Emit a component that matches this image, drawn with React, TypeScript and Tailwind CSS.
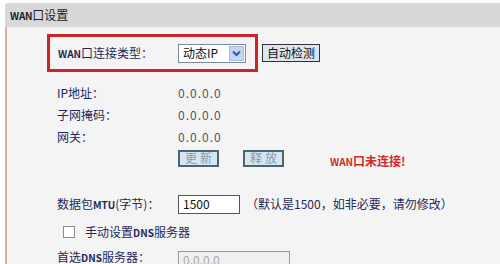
import React from "react";

const font = { fontFamily: '"Noto Sans CJK SC", "Noto Sans", sans-serif' };

function Row({ label, children, h = "h-[22px]" }: { label: React.ReactNode; children?: React.ReactNode; h?: string }) {
  return (
    <div className={`flex items-center ${h}`}>
      <div className="w-[171px] pl-[50px] shrink-0 text-[12px] text-[#1f2858] whitespace-nowrap">{label}</div>
      <div className="flex items-center">{children}</div>
    </div>
  );
}

export default function App() {
  return (
    <div className="w-[500px] h-[264px] bg-white pt-[3px] overflow-hidden" style={font}>
      <div className="ml-[5px] flex flex-col">
        <div className="h-[24px] shrink-0 bg-[#d8d8d8] flex items-center pl-[5px] text-[12px] text-[#222] rounded-tl-[3px]">
          <span className="text-[10px] font-bold tracking-tight">WAN</span>
          <span>口设置</span>
        </div>
        <div className="h-[260px] shrink-0 bg-[#f4f4f4] border-l-2 border-[#d4b0a0] flex flex-col">
          <div className="flex items-center mt-[7px]">
            <div className="ml-[40px] w-[211px] h-[38px] border-[3px] border-[#c8262a] flex items-center pl-[8px]">
              <div className="w-[120px] text-[12px] text-[#1f2858] whitespace-nowrap">
                <span className="text-[10px] font-bold">WAN</span>口连接类型：
              </div>
              <div className="w-[68px] h-[19px] bg-white border border-[#7a8a9a] flex items-center text-[12px] text-[#111]">
                <span className="pl-[4px] flex-1">动态IP</span>
                <span className="w-[15px] h-[15px] mr-[1px] bg-[#c6d6f0] border border-[#a8bce0] flex items-center justify-center">
                  <svg width="9" height="7" viewBox="0 0 9 7">
                    <path d="M1 1.5 L4.5 5 L8 1.5" stroke="#2f5ca8" strokeWidth="2" fill="none" />
                  </svg>
                </span>
              </div>
            </div>
            <div className="ml-[4px] h-[18px] px-[4px] bg-[#dce6f2] border border-[#333] flex items-center text-[12px] text-[#111]">
              自动检测
            </div>
          </div>
          <div className="mt-[10px]">
            <Row label={<>IP地址：</>}>
              <span className="text-[12px] text-[#555] tracking-[1px]">0.0.0.0</span>
            </Row>
            <Row label="子网掩码：">
              <span className="text-[12px] text-[#555] tracking-[1px]">0.0.0.0</span>
            </Row>
            <Row label="网关：">
              <span className="text-[12px] text-[#555] tracking-[1px]">0.0.0.0</span>
            </Row>
            <Row label="" h="h-[18px] mt-[1px]">
              <div className="w-[41px] h-[17px] bg-[#d4e6f4] border-2 border-[#4a6470] flex items-center justify-center text-[12px] text-[#8a9aa6] tracking-[3px] pl-[3px]">
                更新
              </div>
              <div className="ml-[24px] w-[41px] h-[17px] bg-[#d4e6f4] border-2 border-[#4a6470] flex items-center justify-center text-[12px] text-[#8a9aa6] tracking-[3px] pl-[3px]">
                释放
              </div>
              <div className="ml-[46px] mt-[6px] text-[12px] font-bold text-[#d42a2a] whitespace-nowrap">
                <span className="text-[10px]">WAN</span>口未连接!
              </div>
            </Row>
          </div>
          <div className="mt-[26px]">
            <Row label={<>数据包<span className="text-[10px] font-bold">MTU</span>(字节)：</>} h="h-[22px]">
              <div className="w-[62px] h-[19px] bg-white border border-[#555] flex items-center pl-[4px] text-[12px] text-[#111]">1500</div>
              <span className="ml-[6px] text-[12px] text-[#1f2858] whitespace-nowrap">（默认是1500，如非必要，请勿修改）</span>
            </Row>
            <div className="flex items-center h-[26px] mt-[4px] pl-[56px]">
              <span className="w-[12px] h-[12px] bg-white border border-[#8a8a8a]" />
              <span className="ml-[10px] text-[12px] text-[#1f2858]">手动设置<span className="text-[10px] font-bold">DNS</span>服务器</span>
            </div>
            <Row label={<>首选<span className="text-[10px] font-bold">DNS</span>服务器：</>} h="h-[24px]">
              <div className="w-[112px] h-[19px] mt-[6px] bg-[#f0f0f0] border border-[#999] flex items-center pl-[4px] text-[12px] text-[#aaa]">0.0.0.0</div>
            </Row>
          </div>
        </div>
      </div>
    </div>
  );
}
